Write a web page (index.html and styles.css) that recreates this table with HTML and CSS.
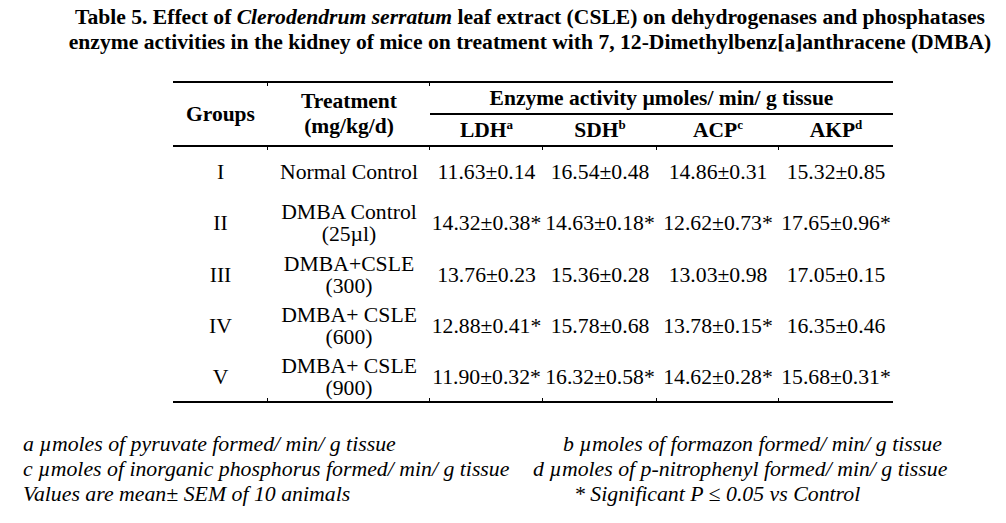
FILE: index.html
```html
<!DOCTYPE html>
<html>
<head>
<meta charset="utf-8">
<link rel="stylesheet" href="styles.css">
</head>
<body>
<div class="page">
  <h1 class="title">Table 5. Effect of <i>Clerodendrum serratum</i> leaf extract (CSLE) on dehydrogenases and phosphatases<br>enzyme activities in the kidney of mice on treatment with 7, 12-Dimethylbenz[a]anthracene (DMBA)</h1>
  <table class="data">
    <colgroup>
      <col class="c-grp"><col class="c-trt"><col class="c-ldh"><col class="c-sdh"><col class="c-acp"><col class="c-akp">
    </colgroup>
    <thead>
      <tr class="h1">
        <th rowspan="2" class="hgrp">Groups</th>
        <th rowspan="2" class="htrt">Treatment<br>(mg/kg/d)</th>
        <th colspan="4" class="henz">Enzyme activity µmoles/ min/ g tissue</th>
      </tr>
      <tr class="h2">
        <th>LDH<sup>a</sup></th>
        <th>SDH<sup>b</sup></th>
        <th>ACP<sup>c</sup></th>
        <th>AKP<sup>d</sup></th>
      </tr>
    </thead>
    <tbody>
      <tr class="r1">
        <td>I</td><td class="trt">Normal Control</td>
        <td class="num">11.63±0.14</td><td class="num">16.54±0.48</td><td class="num">14.86±0.31</td><td class="num">15.32±0.85</td>
      </tr>
      <tr class="r2">
        <td>II</td><td class="trt">DMBA Control<br>(25µl)</td>
        <td class="num">14.32±0.38*</td><td class="num">14.63±0.18*</td><td class="num">12.62±0.73*</td><td class="num">17.65±0.96*</td>
      </tr>
      <tr class="r3">
        <td>III</td><td class="trt">DMBA+CSLE<br>(300)</td>
        <td class="num">13.76±0.23</td><td class="num">15.36±0.28</td><td class="num">13.03±0.98</td><td class="num">17.05±0.15</td>
      </tr>
      <tr class="r4">
        <td>IV</td><td class="trt">DMBA+ CSLE<br>(600)</td>
        <td class="num">12.88±0.41*</td><td class="num">15.78±0.68</td><td class="num">13.78±0.15*</td><td class="num">16.35±0.46</td>
      </tr>
      <tr class="r5">
        <td>V</td><td class="trt">DMBA+ CSLE<br>(900)</td>
        <td class="num">11.90±0.32*</td><td class="num">16.32±0.58*</td><td class="num">14.62±0.28*</td><td class="num">15.68±0.31*</td>
      </tr>
    </tbody>
  </table>
  <div class="notes">
    <span class="n-left">a µmoles of pyruvate formed/ min/ g tissue</span>
    <span class="n-right n-b">b µmoles of formazon formed/ min/ g tissue</span>
    <span class="n-left">c µmoles of inorganic phosphorus formed/ min/ g tissue</span>
    <span class="n-right n-d">d µmoles of p-nitrophenyl formed/ min/ g tissue</span>
    <span class="n-left">Values are mean± SEM of 10 animals</span>
    <span class="n-right n-s">* Significant P ≤ 0.05 vs Control</span>
  </div>
</div>
</body>
</html>
```

FILE: styles.css
```css
html, body {
  margin: 0;
  padding: 0;
  background: #fff;
}
.page {
  width: 1006px;
  height: 523px;
  font-family: "Liberation Serif", "Times New Roman", serif;
  color: #000;
  overflow: hidden;
}
.title {
  margin: 0;
  padding: 5px 0 0 54px;
  font-size: 21.6px;
  line-height: 25px;
  font-weight: bold;
  text-align: center;
  white-space: nowrap;
}
.data {
  margin: 26px 0 0 173px;
  width: 720px;
  border-collapse: collapse;
  table-layout: fixed;
  font-size: 21.7px;
}
.c-grp { width: 95px; }
.c-trt { width: 162px; }
.c-ldh { width: 113px; }
.c-sdh { width: 114px; }
.c-acp { width: 122px; }
.c-akp { width: 114px; }
.data th, .data td {
  padding: 0;
  text-align: center;
  vertical-align: middle;
  white-space: nowrap;
  position: relative;
}
.data th {
  font-weight: bold;
  font-size: 21.5px;
}
.data thead tr.h1 th {
  border-top: 2px solid #000;
}
.h1 { height: 32px; }
.h2 { height: 32px; }
.henz {
  border-bottom: 2px solid #000;
  line-height: 24px;
}
.htrt { line-height: 25px; }
.data thead th {
  border-bottom: 2px solid #000;
}
.h2 th { line-height: 24px; }
.data sup {
  font-size: 13px;
  line-height: 0;
  vertical-align: 8px;
  font-weight: bold;
}
.data td {
  line-height: 22px;
}
.r1 { height: 51px; }
.r2 { height: 52px; }
.r3 { height: 51px; }
.r4 { height: 52px; }
.r5 { height: 50px; }
.r5 td { border-bottom: 2px solid #000; }
/* small column ticks of the original Word table */
.r1 td + td::before,
.h1 th + th::before,
.r5 td + td::after {
  content: "";
  position: absolute;
  left: -1px;
  width: 1px;
  height: 3px;
  background: #000;
}
.r1 td + td::before { top: 0; }
.h1 th + th::before { top: 0; }
.r5 td + td::after { bottom: 0; }
.notes {
  margin-top: 29px;
  padding-left: 23px;
  display: grid;
  grid-template-columns: 510px 1fr;
  font-size: 21.8px;
  line-height: 25px;
  font-style: italic;
  white-space: nowrap;
}
.n-b { padding-left: 30px; }
.n-d { padding-left: 0; }
.n-s { padding-left: 41px; }
```
